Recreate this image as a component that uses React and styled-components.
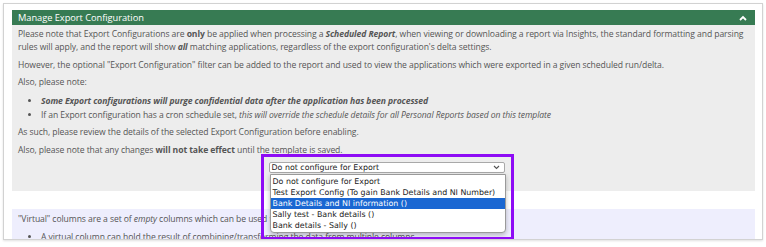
import styled, { createGlobalStyle } from "styled-components";

const GlobalStyle = createGlobalStyle`
  body {
    margin: 0;
    background: #fff;
    font-family: "Open Sans", "Liberation Sans", sans-serif;
  }
`;

const Page = styled.div`
  padding: 3px;
`;

// Outer card that holds both panels
const Card = styled.div`
  position: relative;
  width: 760px;
  height: 237px;
  box-sizing: border-box;
  border: 1px solid #d2d2d2;
  box-shadow: 0 1px 2px rgba(0, 0, 0, 0.12);
  padding: 6px 7px 0 8px;
  overflow: hidden;
`;

const Bar = styled.div`
  display: flex;
  align-items: center;
  justify-content: space-between;
  height: 15px;
  padding: 0 8px 0 6px;
  background: #377b53;
  color: #fff;
  font-size: 9.3px;
  letter-spacing: -0.05px;
`;

const Panel = styled.div`
  background: ${(p) => p.bg};
  color: #555;
  font-size: 8.6px;
  letter-spacing: -0.08px;
  line-height: 13px;
  padding: ${(p) => p.pad};
`;

const Gap = styled.div`
  height: 18px;
`;

const P = styled.p`
  margin: 0 0 4.6px;
`;

const List = styled.ul`
  margin: 0 0 4.6px;
  padding-left: 23px;
  li::marker {
    font-size: 8px;
  }
`;

const SelectArea = styled.div`
  display: flex;
  justify-content: center;
  padding-left: 6px;
  margin-top: 2px;
`;

const SelectBox = styled.div`
  position: relative;
  width: 236px;
  height: 11px;
  box-sizing: border-box;
  display: flex;
  align-items: center;
  justify-content: space-between;
  padding: 0 4px 0 2px;
  background: #fff;
  border: 1px solid #a9a9a9;
  border-radius: 2px;
  font-family: "DejaVu Sans", sans-serif;
  font-size: 7.9px;
  letter-spacing: 0;
  color: #222;
`;

const Dropdown = styled.div`
  position: absolute;
  top: 11px;
  left: 0;
  width: 236px;
  box-sizing: border-box;
  background: #fff;
  border: 1px solid #9a9a9a;
  border-radius: 0 0 4px 4px;
  box-shadow: 0 2px 5px rgba(0, 0, 0, 0.25);
  padding: 1px 0 1px;
  z-index: 2;
`;

const Option = styled.div`
  height: 11px;
  line-height: 11px;
  padding-left: 2px;
  font-family: "DejaVu Sans", sans-serif;
  font-size: 7.9px;
  white-space: nowrap;
  color: ${(p) => (p.active ? "#fff" : "#222")};
  background: ${(p) => (p.active ? "#1a67d2" : "transparent")};
`;

// Purple annotation frame drawn over the screenshot
const Highlight = styled.div`
  position: absolute;
  top: -9px;
  left: -9px;
  width: 253px;
  height: 86px;
  box-sizing: border-box;
  border: 3px solid #8e0cf5;
  z-index: 3;
  pointer-events: none;
`;

const options = [
  "Do not configure for Export",
  "Test Export Config (To gain Bank Details and NI Number)",
  "Bank Details and NI information ()",
  "Sally test - Bank details ()",
  "Bank details - Sally ()",
];

export default function App() {
  return (
    <Page>
      <GlobalStyle />
      <Card>
        <Bar>
          <span>Manage Export Configuration</span>
          <svg width="8" height="6" viewBox="0 0 8 6">
            <path d="M1 5 L4 2 L7 5" fill="none" stroke="#fff" strokeWidth="1.8" />
          </svg>
        </Bar>
        <Panel bg="#ededed" pad="3px 6px 18px 6px">
          <P>
            Please note that Export Configurations are <b>only</b> be applied when processing a{" "}
            <b><i>Scheduled Report</i></b>, when viewing or downloading a report via Insights, the
            standard formatting and parsing rules will apply, and the report will show{" "}
            <b><i>all</i></b> matching applications, regardless of the export configuration's delta
            settings.
          </P>
          <P>
            However, the optional "Export Configuration" filter can be added to the report and used
            to view the applications which were exported in a given scheduled run/delta.
          </P>
          <P>Also, please note:</P>
          <List>
            <li>
              <b><i>Some Export configurations will purge confidential data after the application has been processed</i></b>
            </li>
            <li>
              If an Export configuration has a cron schedule set,{" "}
              <i>this will override the schedule details for all Personal Reports based on this template</i>
            </li>
          </List>
          <P>As such, please review the details of the selected Export Configuration before enabling.</P>
          <P>
            Also, please note that any changes <b>will not take effect</b> until the template is saved.
          </P>
          <SelectArea>
            <SelectBox>
              <span>Do not configure for Export</span>
              <svg width="7" height="5" viewBox="0 0 7 5">
                <path d="M1 1 L3.5 3.5 L6 1" fill="none" stroke="#555" strokeWidth="1.1" />
              </svg>
              <Dropdown>
                {options.map((o, i) => (
                  <Option key={o} active={i === 2}>
                    {o}
                  </Option>
                ))}
              </Dropdown>
              <Highlight />
            </SelectBox>
          </SelectArea>
        </Panel>
        <Gap />
        <Panel bg="#eeeefd" pad="4px 6px">
          <P>
            "Virtual" columns are a set of <i>empty</i> columns which can be used to hold data
            which is derived from other columns
          </P>
          <List>
            <li>A virtual column can hold the result of combining/transforming the data from multiple columns</li>
          </List>
        </Panel>
      </Card>
    </Page>
  );
}
